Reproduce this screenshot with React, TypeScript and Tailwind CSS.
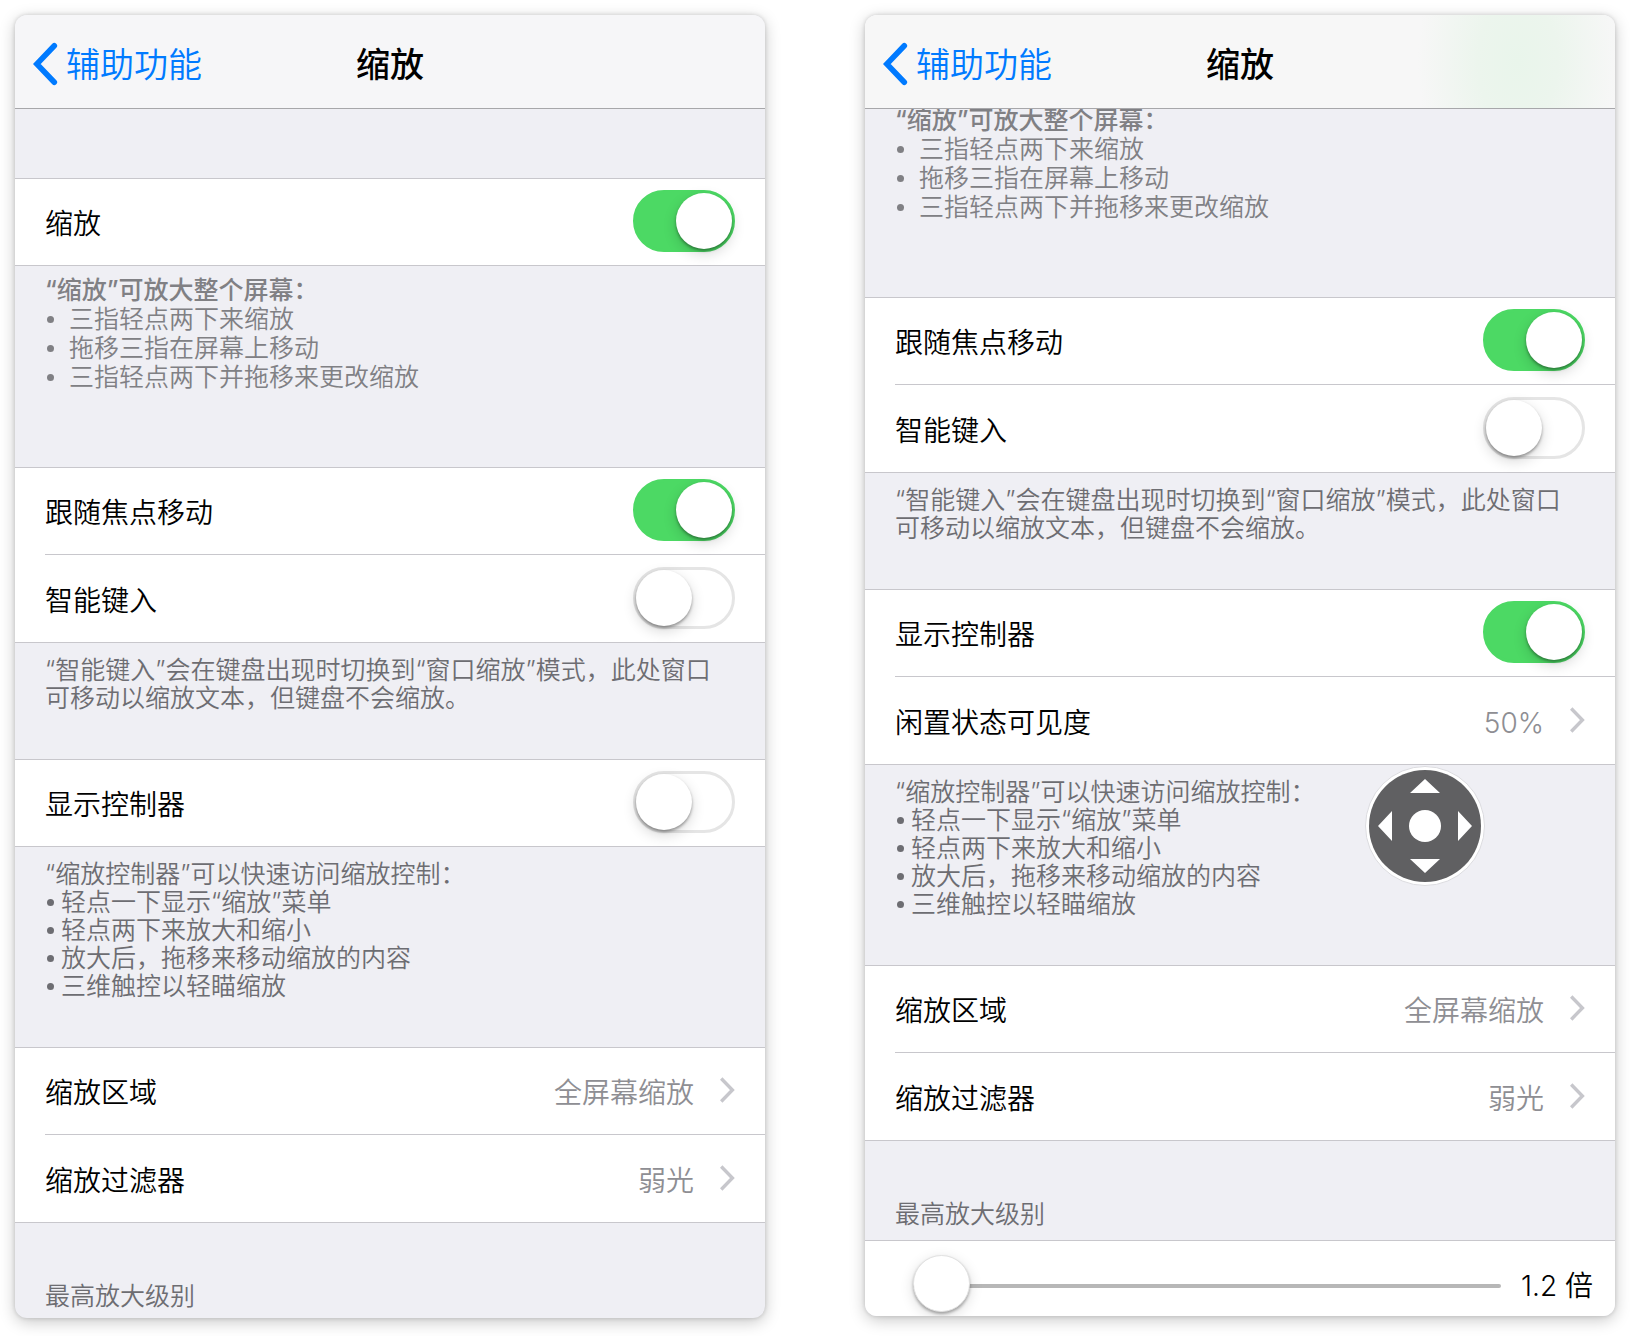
import { useId, type ReactNode } from 'react';

interface PanelProps {
  tinted?: boolean;
  children: ReactNode;
}

const Panel = ({ tinted, children }: PanelProps) => {
  return (
    <section className="overflow-hidden rounded-xl bg-[#efeff4] shadow-[0_0_4px_rgba(0,0,0,0.16),0_4px_16px_rgba(0,0,0,0.22)]">
      <header
        className={`relative z-10 grid h-[94px] grid-cols-[1fr_auto_1fr] items-center border-b border-[#a7a7aa] px-[18px] pt-1 text-[34px] leading-[48px] ${
          tinted
            ? 'bg-[#f7f7f7] bg-[radial-gradient(100px_160px_at_87%_50%,#e9f5eb_0%,#ecf5ed_40%,#f7f7f7_100%)]'
            : 'bg-[#f6f6f8]'
        }`}
      >
        <button type="button" className="flex items-center gap-2 justify-self-start text-[#007aff]">
          <svg width="25" height="44" viewBox="0 0 25 44" fill="none" aria-hidden="true">
            <path
              d="M21.3 3.7 3.8 22l17.5 18.3"
              stroke="currentColor"
              strokeWidth="5.6"
              strokeLinecap="round"
              strokeLinejoin="miter"
            />
          </svg>
          <span className="pt-0.5">辅助功能</span>
        </button>
        <h1 className="pt-0.5 font-medium text-black">缩放</h1>
      </header>
      {children}
    </section>
  );
};

const Group = ({ children }: { children: ReactNode }) => {
  return <ul className="border-y border-[#c8c7cc] bg-white">{children}</ul>;
};

const rowClass =
  'ml-[30px] flex h-[86px] items-center pr-[30px] pb-0.5 text-[28px] leading-10 text-black not-first:h-[88px] not-first:border-t not-first:border-[#c8c7cc]';

interface SwitchRowProps {
  label: string;
  on?: boolean;
}

const SwitchRow = ({ label, on = false }: SwitchRowProps) => {
  const id = useId();
  return (
    <li className={rowClass}>
      <label htmlFor={id} className="flex-1 pt-1.5">
        {label}
      </label>
      <input
        id={id}
        type="checkbox"
        role="switch"
        defaultChecked={on}
        className="h-[62px] w-[102px] shrink-0 appearance-none rounded-full border-3 border-[#e5e5e5] bg-white before:block before:size-14 before:rounded-full before:bg-white before:shadow-[0_2px_3px_rgba(0,0,0,0.35),0_5px_14px_rgba(0,0,0,0.16)] checked:border-[#4cd964] checked:bg-[#4cd964] checked:before:translate-x-10"
      />
    </li>
  );
};

interface LinkRowProps {
  label: string;
  value: string;
}

const LinkRow = ({ label, value }: LinkRowProps) => {
  return (
    <li className={rowClass}>
      <button type="button" className="flex flex-1 items-center text-left">
        <span className="flex-1 pt-1.5">{label}</span>
        <span className="mr-[26px] pt-1.5 text-[#8e8e93]">{value}</span>
        <svg width="15" height="26" viewBox="0 0 15 26" fill="none" aria-hidden="true">
          <path d="M1.2 1.5 12.4 13 1.2 24.5" stroke="#c7c7cc" strokeWidth="3.4" />
        </svg>
      </button>
    </li>
  );
};

const Dot = () => <span className="ml-[2px] block size-[7px] rounded-full bg-current" />;

const GestureNote = ({ scrolled = false }: { scrolled?: boolean }) => {
  return (
    <div
      className={`px-[30px] pt-[10px] pb-[75px] text-[25px] leading-[29px] text-[#808084] ${
        scrolled ? '-mt-[13px]' : ''
      }`}
    >
      <p className="font-medium">“缩放”可放大整个屏幕：</p>
      <ul>
        {['三指轻点两下来缩放', '拖移三指在屏幕上移动', '三指轻点两下并拖移来更改缩放'].map((text) => (
          <li key={text} className="flex items-center">
            <span className="w-6">
              <Dot />
            </span>
            {text}
          </li>
        ))}
      </ul>
    </div>
  );
};

const TypingNote = () => {
  return (
    <p className="px-[30px] pt-[13px] pb-[47px] text-[25px] leading-7 text-[#6d6d72]">
      “智能键入”会在键盘出现时切换到“窗口缩放”模式，此处窗口
      <br />
      可移动以缩放文本，但键盘不会缩放。
    </p>
  );
};

const ControllerNote = ({ children }: { children?: ReactNode }) => {
  return (
    <div className="relative px-[30px] pt-[13px] pb-[47px] text-[25px] leading-7 text-[#6d6d72]">
      <p>“缩放控制器”可以快速访问缩放控制：</p>
      <ul>
        {['轻点一下显示“缩放”菜单', '轻点两下来放大和缩小', '放大后，拖移来移动缩放的内容', '三维触控以轻瞄缩放'].map(
          (text) => (
            <li key={text} className="flex items-center">
              <span className="w-4">
                <Dot />
              </span>
              {text}
            </li>
          ),
        )}
      </ul>
      {children}
    </div>
  );
};

// Floating zoom controller, sits over the page content
const ZoomController = () => {
  return (
    <button type="button" aria-label="缩放控制器" className="absolute top-px right-[130px] rounded-full">
      <svg width="120" height="120" viewBox="0 0 120 120" aria-hidden="true">
        <circle cx="60" cy="60" r="59.5" fill="#fff" stroke="#dcdce0" />
        <circle cx="60" cy="60" r="56" fill="#606062" />
        <circle cx="60" cy="60" r="16" fill="#fff" />
        <path d="M60 13 75 27H45ZM60 107 45 93H75ZM13 60 27 45V75ZM107 60 93 75V45Z" fill="#fff" />
      </svg>
    </button>
  );
};

const ZoomGroup = () => {
  return (
    <Group>
      <LinkRow label="缩放区域" value="全屏幕缩放" />
      <LinkRow label="缩放过滤器" value="弱光" />
    </Group>
  );
};

const App = () => {
  return (
    <main className="grid grid-cols-2 items-start gap-[100px] bg-white px-[15px] pt-[15px] pb-[18px] font-['Inter','Noto_Sans_CJK_SC',sans-serif] font-[350]">
      <Panel>
        <div className="h-[69px]" />
        <Group>
          <SwitchRow label="缩放" on />
        </Group>
        <GestureNote />
        <Group>
          <SwitchRow label="跟随焦点移动" on />
          <SwitchRow label="智能键入" />
        </Group>
        <TypingNote />
        <Group>
          <SwitchRow label="显示控制器" />
        </Group>
        <ControllerNote />
        <ZoomGroup />
        <h2 className="px-[30px] pt-[59px] pb-2 text-[25px] leading-7 text-[#6d6d72]">最高放大级别</h2>
      </Panel>

      <Panel tinted>
        <GestureNote scrolled />
        <Group>
          <SwitchRow label="跟随焦点移动" on />
          <SwitchRow label="智能键入" />
        </Group>
        <TypingNote />
        <Group>
          <SwitchRow label="显示控制器" on />
          <LinkRow label="闲置状态可见度" value="50%" />
        </Group>
        <ControllerNote>
          <ZoomController />
        </ControllerNote>
        <ZoomGroup />
        <h2 id="max-zoom" className="px-[30px] pt-[59px] pb-3 text-[25px] leading-7 text-[#6d6d72]">
          最高放大级别
        </h2>
        <div className="flex items-center gap-5 border-t border-[#c8c7cc] bg-white pt-4 pr-[22px] pb-0.5 pl-12 text-[28px] leading-10">
          <input
            type="range"
            aria-labelledby="max-zoom"
            min={1.2}
            max={15}
            step={0.1}
            defaultValue={1.2}
            className="h-[57px] min-w-0 flex-1 appearance-none bg-transparent [&::-webkit-slider-runnable-track]:h-1 [&::-webkit-slider-runnable-track]:rounded-full [&::-webkit-slider-runnable-track]:bg-[#b7b7b7] [&::-webkit-slider-thumb]:-mt-[29px] [&::-webkit-slider-thumb]:size-[57px] [&::-webkit-slider-thumb]:appearance-none [&::-webkit-slider-thumb]:rounded-full [&::-webkit-slider-thumb]:border [&::-webkit-slider-thumb]:border-[#e2e2e2] [&::-webkit-slider-thumb]:bg-white [&::-webkit-slider-thumb]:shadow-[0_2px_3px_rgba(0,0,0,0.3),0_4px_14px_rgba(0,0,0,0.14)]"
          />
          <output>1.2 倍</output>
        </div>
      </Panel>
    </main>
  );
};

export default App;
